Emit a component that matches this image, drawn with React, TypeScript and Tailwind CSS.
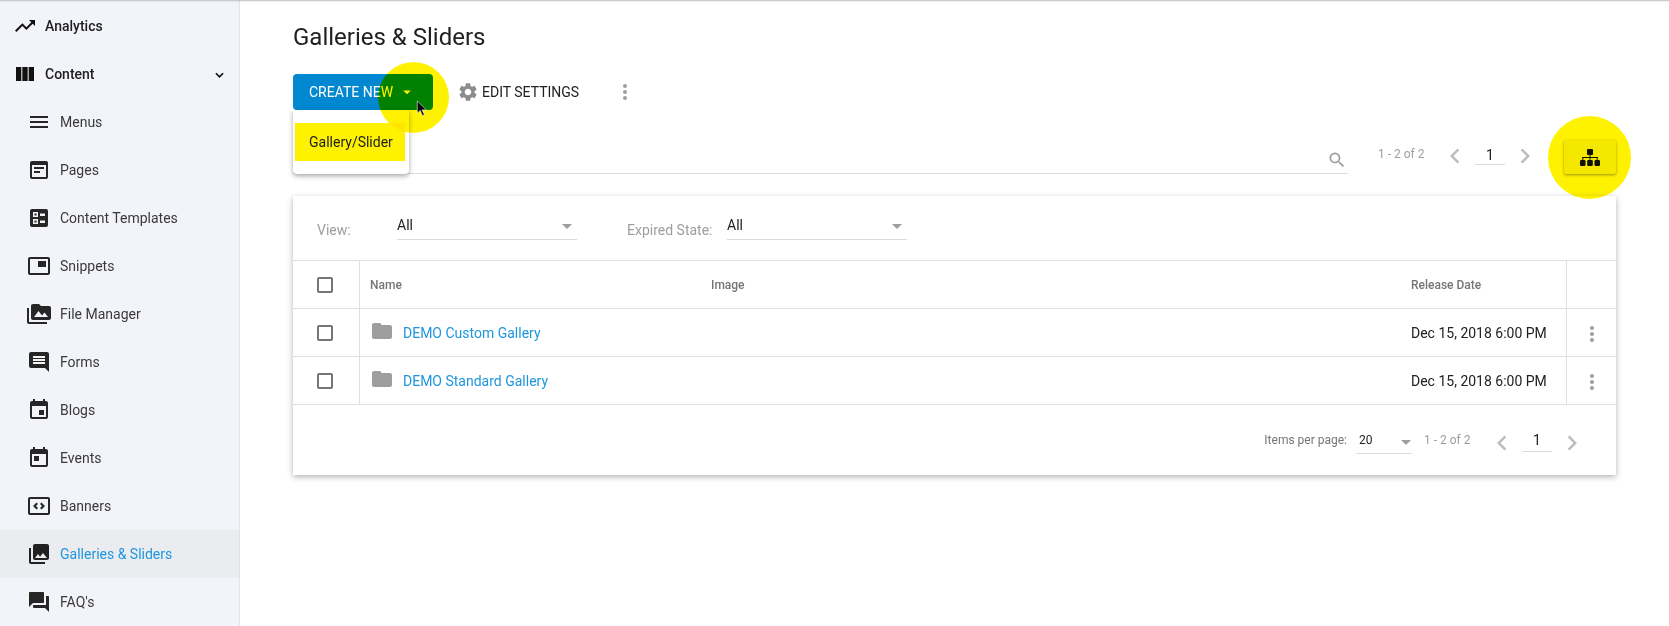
import type { ReactNode } from "react";
import {
  MdTrendingUp, MdViewColumn, MdMenu, MdPictureInPicture, MdPermMedia, MdInsertComment, MdEvent, MdToday,
  MdPhotoLibrary, MdQuestionAnswer, MdSettings, MdMoreVert, MdSearch, MdChevronLeft,
  MdChevronRight, MdFolder, MdArrowDropDown,
} from "react-icons/md";

const PagesIcon = () => (
  <svg viewBox="0 0 24 24" className="w-6 h-6" fill="currentColor">
    <path d="M19 3H5a2 2 0 0 0-2 2v14a2 2 0 0 0 2 2h14a2 2 0 0 0 2-2V5a2 2 0 0 0-2-2zm0 16H5V7h14v12zM7 9h10v2H7V9zm0 4h6v2H7v-2z" />
  </svg>
);

const TemplatesIcon = () => (
  <svg viewBox="0 0 24 24" className="w-6 h-6" fill="currentColor">
    <path fillRule="evenodd" d="M5 3h14a2 2 0 0 1 2 2v14a2 2 0 0 1-2 2H5a2 2 0 0 1-2-2V5a2 2 0 0 1 2-2zm1 3v5h5V6H6zm1.500 1.500h2v2h-2v-2zM6 13v5h5v-5H6zm1.500 1.500h2v2h-2v-2zM13 7.500V10h5V7.500h-5zM13 14.500V17h5v-2.500h-5z" />
  </svg>
);

const BannersIcon = () => (
  <svg viewBox="0 0 24 24" className="w-6 h-6" fill="currentColor">
    <path d="M21 3H3a2 2 0 0 0-2 2v14a2 2 0 0 0 2 2h18a2 2 0 0 0 2-2V5a2 2 0 0 0-2-2zm0 16H3V5h18v14zM9.500 8.500 6 12l3.500 3.500L11 14l-2-2 2-2-1.500-1.500zm5 0L13 10l2 2-2 2 1.500 1.500L18 12l-3.500-3.500z" />
  </svg>
);

const OrgIcon = () => (
  <svg viewBox="0 0 20 17" className="w-5 h-[17px]" fill="#111">
    <rect x="7" y="0" width="6" height="6" rx="1" />
    <rect x="9.500" y="5" width="1" height="7" />
    <rect x="2.300" y="8" width="15.400" height="1" />
    <rect x="2.300" y="8" width="1" height="4" />
    <rect x="16.700" y="8" width="1" height="4" />
    <rect x="0" y="11" width="5.500" height="6" rx="1.200" />
    <rect x="7.200" y="11" width="5.600" height="6" rx="1.200" />
    <rect x="14.500" y="11" width="5.500" height="6" rx="1.200" />
  </svg>
);

const cls = "w-6 h-6";

const navItems: { label: string; icon: ReactNode; active?: boolean }[] = [
  { label: "Menus", icon: <MdMenu className={cls} /> },
  { label: "Pages", icon: <PagesIcon /> },
  { label: "Content Templates", icon: <TemplatesIcon /> },
  { label: "Snippets", icon: <MdPictureInPicture className={cls} /> },
  { label: "File Manager", icon: <MdPermMedia className={cls} /> },
  { label: "Forms", icon: <MdInsertComment className={cls} /> },
  { label: "Blogs", icon: <MdEvent className={cls} /> },
  { label: "Events", icon: <MdToday className={cls} /> },
  { label: "Banners", icon: <BannersIcon /> },
  { label: "Galleries & Sliders", icon: <MdPhotoLibrary className={cls} />, active: true },
  { label: "FAQ's", icon: <MdQuestionAnswer className={cls} /> },
];

const rows = ["DEMO Custom Gallery", "DEMO Standard Gallery"];

function Checkbox() {
  return <div className="w-4 h-4 rounded-[2px] border-2 border-[#757575]" />;
}

function FilterSelect() {
  return (
    <div className="w-[180px] h-[30px] flex justify-between border-b border-[#dcdcdc] text-sm text-[#212121] pt-[5px]">
      <span>All</span>
      <MdArrowDropDown className="w-6 h-6 text-[#9e9e9e] -mt-[1px] -mr-[2px]" />
    </div>
  );
}

export default function App() {
  return (
    <div className="relative flex h-[626px] w-[1669px] overflow-hidden bg-white text-[#212121] font-['Roboto',sans-serif]">
      {/* Sidebar */}
      <aside className="w-[240px] shrink-0 pt-[2px] bg-[#f3f4f9] border-r border-[#e2e3e7]">
        <div className="h-12 flex items-center pl-[13px] text-sm font-medium text-[#212121]">
          <MdTrendingUp className="w-6 h-6 text-[#111] mr-2" />
          Analytics
        </div>
        <div className="h-12 flex items-center pl-[13px] pr-[15px] text-sm font-medium text-[#212121]">
          <MdViewColumn className="w-6 h-6 text-[#111] mr-2" />
          <span className="flex-1">Content</span>
          <svg viewBox="0 0 10 6" className="w-[9px] h-[6px] mt-[2px]" fill="none" stroke="#111" strokeWidth="1.800">
            <path d="M1 1l4 4 4-4" />
          </svg>
        </div>
        {navItems.map((item) => (
          <div key={item.label} className={`h-12 flex items-center pl-[27px] text-sm ${item.active ? "bg-[#ebecf0] text-[#1e96dc]" : "text-[#3a3a3a]"}`}>
            <span className={`mr-[9px] ${item.active ? "text-[#212121]" : "text-[#262626]"}`}>{item.icon}</span>
            {item.label}
          </div>
        ))}
      </aside>

      {/* Main */}
      <main className="flex-1 pl-[53px] pr-[53px]">
        <h1 className="h-[74px] pt-[22px] text-2xl leading-[30px] text-[#212121]">Galleries &amp; Sliders</h1>

        <div className="h-9 flex items-center">
          <button className="w-[140px] h-9 rounded-[4px] bg-[#0288d1] text-white text-sm flex items-center pl-4">
            CREATE NEW
            <MdArrowDropDown className="w-[18px] h-[18px] ml-[5px]" />
          </button>
          <button className="ml-[24px] flex items-center text-sm text-[#212121]">
            <MdSettings className="w-[22px] h-[22px] text-[#8c8c8c] mr-[3px]" />
            EDIT SETTINGS
          </button>
          <MdMoreVert className="ml-[34px] w-6 h-6 text-[#9e9e9e]" />
        </div>

        {/* Search and pager */}
        <div className="mt-[30px] h-[34px] flex">
          <div className="w-[1055px] flex justify-end border-b border-[#dcdcdc] pr-[1px] pt-[10px]">
            <MdSearch className="w-5 h-5 text-[#9e9e9e]" />
          </div>
          <div className="flex h-6 items-center">
            <span className="ml-[30px] mt-[4px] w-[46px] text-xs text-[#9e9e9e] whitespace-nowrap">1 - 2 of 2</span>
            <MdChevronLeft className="ml-[16px] mt-[8px] w-[30px] h-[30px] text-[#bdbdbd]" />
            <div className="ml-[5px] w-[30px] h-[25px] pt-[5px] text-center text-sm border-b border-[#dcdcdc]">1</div>
            <MdChevronRight className="ml-[5px] mt-[8px] w-[30px] h-[30px] text-[#bdbdbd]" />
          </div>
          <button className="ml-[24px] w-[52px] h-[34px] rounded-[2px] bg-[#f5f5f5] shadow-[0_1px_3px_rgba(0,0,0,0.4)] flex items-center justify-center">
            <OrgIcon />
          </button>
        </div>

        {/* Card */}
        <section className="mt-[22px] w-[1323px] bg-white shadow-[0_2px_6px_rgba(0,0,0,0.3)]">
          <div className="h-[64px] flex items-start pt-[14px]">
            <span className="ml-6 w-[80px] pt-[10px] text-sm text-[#9e9e9e]">View:</span>
            <FilterSelect />
            <span className="ml-[50px] w-[100px] pt-[10px] text-sm text-[#9e9e9e]">Expired State:</span>
            <FilterSelect />
          </div>
          <div className="h-12 flex items-center border-t border-[#e0e0e0] text-xs font-medium text-[#757575]">
            <div className="w-[67px] h-full flex items-center pl-[24px] border-r border-[#e0e0e0] shrink-0"><Checkbox /></div>
            <div className="w-[351px] pl-[10px]">Name</div>
            <div className="w-[700px]">Image</div>
            <div className="w-[155px]">Release Date</div>
            <div className="h-full flex-1 border-l border-[#e0e0e0]" />
          </div>
          {rows.map((name) => (
            <div key={name} className="h-12 flex items-center border-t border-[#e0e0e0] text-sm">
              <div className="w-[67px] h-full flex items-center pl-[24px] border-r border-[#e0e0e0] shrink-0"><Checkbox /></div>
              <div className="w-[351px] pl-[11px] flex items-center text-[#1e96dc]">
                <MdFolder className="w-6 h-6 text-[#9e9e9e] mr-[9px] -mt-[3px] -ml-[1px]" />
                <span className="whitespace-nowrap">{name}</span>
              </div>
              <div className="w-[700px]" />
              <div className="w-[155px] whitespace-nowrap text-[#212121]">Dec 15, 2018 6:00 PM</div>
              <div className="h-full flex-1 border-l border-[#e0e0e0] flex items-center justify-center">
                <MdMoreVert className="w-6 h-6 text-[#9e9e9e] mt-[2px]" />
              </div>
            </div>
          ))}
          <div className="h-[71px] flex items-start justify-end border-t border-[#e0e0e0] pt-[24px] pr-[29px] text-xs">
            <span className="text-[#757575] mt-[3px]">Items per page:</span>
            <div className="ml-[9px] w-[56px] h-[25px] border-b border-[#dcdcdc] flex justify-between pl-[3px] text-[#212121] pt-[3px]">
              <span>20</span>
              <MdArrowDropDown className="w-6 h-6 text-[#9e9e9e] -mt-[2px] -mr-[6px]" />
            </div>
            <span className="ml-[12px] mt-[3px] w-[46px] whitespace-nowrap text-[#9e9e9e]">1 - 2 of 2</span>
            <MdChevronLeft className="ml-[17px] -mt-[1px] w-[30px] h-[30px] text-[#bdbdbd]" />
            <div className="ml-[5px] w-[30px] h-[23px] pt-[1px] text-center text-sm border-b border-[#dcdcdc]">1</div>
            <MdChevronRight className="ml-[5px] -mt-[1px] w-[30px] h-[30px] text-[#bdbdbd]" />
          </div>
        </section>
      </main>

      {/* Top shadow of the app bar */}
      <div className="absolute inset-x-0 top-0 h-[2px] bg-gradient-to-b from-[#bdbdbd] to-transparent" />

      {/* Dropdown menu */}
      <div className="absolute left-[293px] top-[110px] w-[116px] h-[64px] rounded-b-[4px] bg-white shadow-[0_2px_5px_rgba(0,0,0,0.35)] text-sm flex items-center">
        <div className="ml-[2px] w-[110px] h-[38px] flex items-center pl-[14px] bg-[#fff200] text-[#212121]">Gallery/Slider</div>
      </div>

      {/* Yellow marker highlights */}
      <div className="absolute left-[378px] top-[62px] w-[71px] h-[71px] rounded-full bg-[#fff200] mix-blend-multiply" />
      <div className="absolute left-[1548px] top-[116px] w-[83px] h-[83px] rounded-full bg-[#fff200] mix-blend-multiply" />

      {/* Mouse pointer */}
      <svg viewBox="0 0 12 18" className="absolute left-[416px] top-[100px] w-[12px] h-[17px]">
        <path d="M1 1v13l3-3 2.500 5.500 2-1L6 10.500h4.500z" fill="#000" stroke="#fff" strokeWidth="0.6" />
      </svg>
    </div>
  );
}
